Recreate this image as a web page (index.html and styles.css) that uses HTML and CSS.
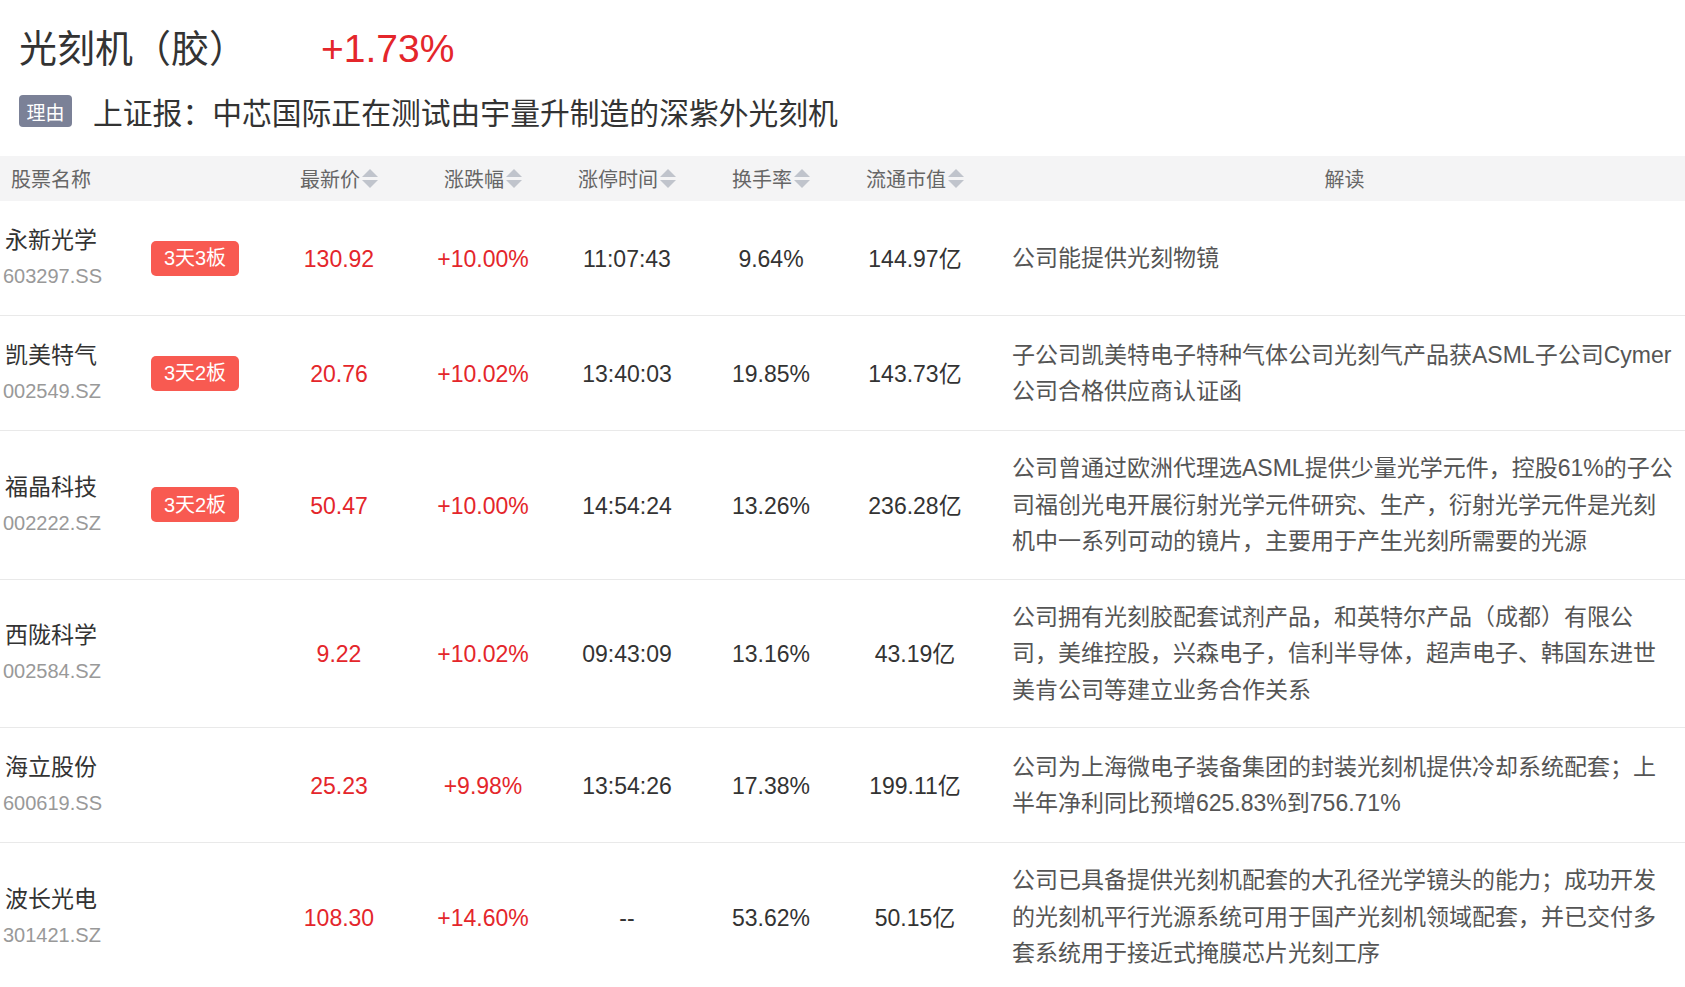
FILE: index.html
```html
<!DOCTYPE html>
<html lang="zh-CN">
<head>
<meta charset="utf-8">
<title>光刻机（胶）</title>
<link rel="stylesheet" href="styles.css">
</head>
<body>
<div class="head">
  <div class="title-row">
    <span class="title">光刻机（胶）</span>
    <span class="pct">+1.73%</span>
  </div>
  <div class="reason-row">
    <span class="reason-tag">理由</span>
    <span class="reason-text">上证报：中芯国际正在测试由宇量升制造的深紫外光刻机</span>
  </div>
</div>

<div class="table">
  <div class="thead">
    <div class="th th-name">股票名称</div>
    <div class="th">最新价<i class="sort"><b class="up"></b><b class="down"></b></i></div>
    <div class="th">涨跌幅<i class="sort"><b class="up"></b><b class="down"></b></i></div>
    <div class="th">涨停时间<i class="sort"><b class="up"></b><b class="down"></b></i></div>
    <div class="th">换手率<i class="sort"><b class="up"></b><b class="down"></b></i></div>
    <div class="th">流通市值<i class="sort"><b class="up"></b><b class="down"></b></i></div>
    <div class="th th-desc">解读</div>
  </div>

  <div class="tr">
    <div class="td td-name"><div class="names"><div class="nm">永新光学</div><div class="code">603297.SS</div></div><span class="board">3天3板</span></div>
    <div class="td red">130.92</div>
    <div class="td red">+10.00%</div>
    <div class="td">11:07:43</div>
    <div class="td">9.64%</div>
    <div class="td">144.97亿</div>
    <div class="td td-desc">公司能提供光刻物镜</div>
  </div>

  <div class="tr">
    <div class="td td-name"><div class="names"><div class="nm">凯美特气</div><div class="code">002549.SZ</div></div><span class="board">3天2板</span></div>
    <div class="td red">20.76</div>
    <div class="td red">+10.02%</div>
    <div class="td">13:40:03</div>
    <div class="td">19.85%</div>
    <div class="td">143.73亿</div>
    <div class="td td-desc">子公司凯美特电子特种气体公司光刻气产品获ASML子公司Cymer公司合格供应商认证函</div>
  </div>

  <div class="tr">
    <div class="td td-name"><div class="names"><div class="nm">福晶科技</div><div class="code">002222.SZ</div></div><span class="board">3天2板</span></div>
    <div class="td red">50.47</div>
    <div class="td red">+10.00%</div>
    <div class="td">14:54:24</div>
    <div class="td">13.26%</div>
    <div class="td">236.28亿</div>
    <div class="td td-desc">公司曾通过欧洲代理选ASML提供少量光学元件，控股61%的子公司福创光电开展衍射光学元件研究、生产，衍射光学元件是光刻机中一系列可动的镜片，主要用于产生光刻所需要的光源</div>
  </div>

  <div class="tr">
    <div class="td td-name"><div class="names"><div class="nm">西陇科学</div><div class="code">002584.SZ</div></div></div>
    <div class="td red">9.22</div>
    <div class="td red">+10.02%</div>
    <div class="td">09:43:09</div>
    <div class="td">13.16%</div>
    <div class="td">43.19亿</div>
    <div class="td td-desc">公司拥有光刻胶配套试剂产品，和英特尔产品（成都）有限公司，美维控股，兴森电子，信利半导体，超声电子、韩国东进世美肯公司等建立业务合作关系</div>
  </div>

  <div class="tr">
    <div class="td td-name"><div class="names"><div class="nm">海立股份</div><div class="code">600619.SS</div></div></div>
    <div class="td red">25.23</div>
    <div class="td red">+9.98%</div>
    <div class="td">13:54:26</div>
    <div class="td">17.38%</div>
    <div class="td">199.11亿</div>
    <div class="td td-desc">公司为上海微电子装备集团的封装光刻机提供冷却系统配套；上半年净利同比预增625.83%到756.71%</div>
  </div>

  <div class="tr">
    <div class="td td-name"><div class="names"><div class="nm">波长光电</div><div class="code">301421.SZ</div></div></div>
    <div class="td red">108.30</div>
    <div class="td red">+14.60%</div>
    <div class="td">--</div>
    <div class="td">53.62%</div>
    <div class="td">50.15亿</div>
    <div class="td td-desc">公司已具备提供光刻机配套的大孔径光学镜头的能力；成功开发的光刻机平行光源系统可用于国产光刻机领域配套，并已交付多套系统用于接近式掩膜芯片光刻工序</div>
  </div>
</div>
</body>
</html>
```

FILE: styles.css
```css
* { box-sizing: border-box; }
html, body {
  margin: 0;
  padding: 0;
  background: #fff;
  font-family: "Liberation Sans", "Noto Sans CJK SC", sans-serif;
  color: #333;
}

.head {
  padding: 26px 0 29px 19px;
}
.title-row {
  display: flex;
  align-items: baseline;
  height: 45px;
  line-height: 45px;
}
.title {
  font-size: 38px;
  color: #333;
}
.pct {
  font-size: 39px;
  color: #e4262b;
  margin-left: 74px;
}
.reason-row {
  display: flex;
  align-items: center;
  margin-top: 24px;
  height: 32px;
}
.reason-tag {
  display: inline-flex;
  align-items: center;
  justify-content: center;
  width: 53px;
  height: 32px;
  border-radius: 4px;
  background: #7b8197;
  color: #fff;
  font-size: 19px;
}
.reason-text {
  margin-left: 21px;
  font-size: 29.8px;
  color: #333;
}

.table {
  width: 100%;
}
.thead, .tr {
  display: grid;
  grid-template-columns: 267px repeat(5, 144px) 1fr;
}
.thead {
  height: 45px;
  background: #f4f4f5;
  align-items: center;
}
.th {
  font-size: 20px;
  color: #666;
  display: flex;
  align-items: center;
  justify-content: center;
  white-space: nowrap;
}
.th-name {
  justify-content: flex-start;
  padding-left: 11px;
}
.th-desc {
  padding-left: 25px;
  padding-right: 8px;
}
.sort {
  display: inline-flex;
  flex-direction: column;
  gap: 3px;
  margin-left: 2px;
}
.sort b {
  display: block;
  width: 0;
  height: 0;
  border-left: 8px solid transparent;
  border-right: 8px solid transparent;
}
.sort .up { border-bottom: 8px solid #c0c4cc; }
.sort .down { border-top: 8px solid #c0c4cc; }

.tr {
  border-bottom: 1px solid #e9e9e9;
  min-height: 115px;
  align-items: center;
}
.td {
  font-size: 23px;
  line-height: 36px;
  height: 36px;
  color: #333;
  text-align: center;
  white-space: nowrap;
  padding-top: 1px;
}
.td.red { color: #e4262b; }
.td-name {
  height: auto;
  padding-top: 0;
  display: flex;
  align-items: center;
  padding-left: 3px;
  text-align: left;
}
.names {
  width: 148px;
  line-height: 36px;
}
.nm {
  font-size: 23px;
  color: #333;
  padding-left: 2px;
}
.code {
  font-size: 20px;
  color: #999;
}
.board {
  display: inline-flex;
  align-items: center;
  justify-content: center;
  width: 88px;
  height: 35px;
  border-radius: 5px;
  background: #f85a51;
  color: #fff;
  font-size: 20px;
}
.td-desc {
  height: auto;
  text-align: left;
  white-space: normal;
  color: #555;
  line-height: 36.5px;
  padding: 19px 8px 19px 25px;
}
```
